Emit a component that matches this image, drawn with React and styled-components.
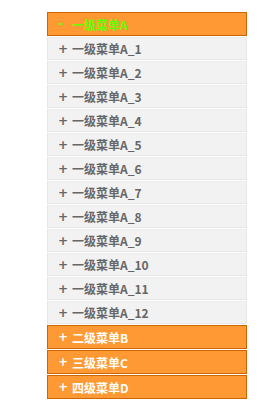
import React, { useState } from "react";
import styled, { createGlobalStyle } from "styled-components";

const GlobalStyle = createGlobalStyle`
  body {
    margin: 0;
    background: #fff;
    font-family: "Noto Sans CJK SC", "Liberation Sans", sans-serif;
  }
`;

const MenuStyles = styled.ul`
  list-style: none;
  margin: 0;
  padding: 12px 0 0 47px;
  width: 200px;
`;

const Head = styled.li`
  display: flex;
  align-items: center;
  box-sizing: border-box;
  height: 24px;
  margin-bottom: 1px;
  padding-left: 10px;
  background: #ff9933;
  border: 1px solid #cc6600;
  color: ${(p) => (p.open ? "#66ff00" : "#fff")};
  font-size: 12px;
  font-weight: bold;
  cursor: pointer;
`;

const Item = styled.li`
  display: flex;
  align-items: center;
  box-sizing: border-box;
  height: 23px;
  margin-bottom: 1px;
  padding-left: 10px;
  background: #f2f2f2;
  border: 1px solid #e6e6e6;
  border-top-color: #ececec;
  color: #666;
  font-size: 12px;
  font-weight: bold;
`;

const Sign = styled.span`
  display: flex;
  align-items: center;
  width: 14px;
  height: 14px;
  font-family: "DejaVu Sans", sans-serif;
  font-size: 12px;
  font-weight: bold;
  line-height: 14px;
`;

const menus = [
  { title: "一级菜单A", items: 12 },
  { title: "二级菜单B", items: 0 },
  { title: "三级菜单C", items: 0 },
  { title: "四级菜单D", items: 0 },
];

export default function App() {
  const [open, setOpen] = useState(0);
  return (
    <>
      <GlobalStyle />
      <MenuStyles>
        {menus.map((menu, i) => (
          <React.Fragment key={menu.title}>
            <Head open={open === i} onClick={() => setOpen(open === i ? -1 : i)}>
              <Sign>{open === i ? "-" : "+"}</Sign>
              {menu.title}
            </Head>
            {open === i &&
              Array.from({ length: menu.items }, (_, n) => (
                <Item key={n}>
                  <Sign>+</Sign>
                  {menu.title}_{n + 1}
                </Item>
              ))}
          </React.Fragment>
        ))}
      </MenuStyles>
    </>
  );
}
